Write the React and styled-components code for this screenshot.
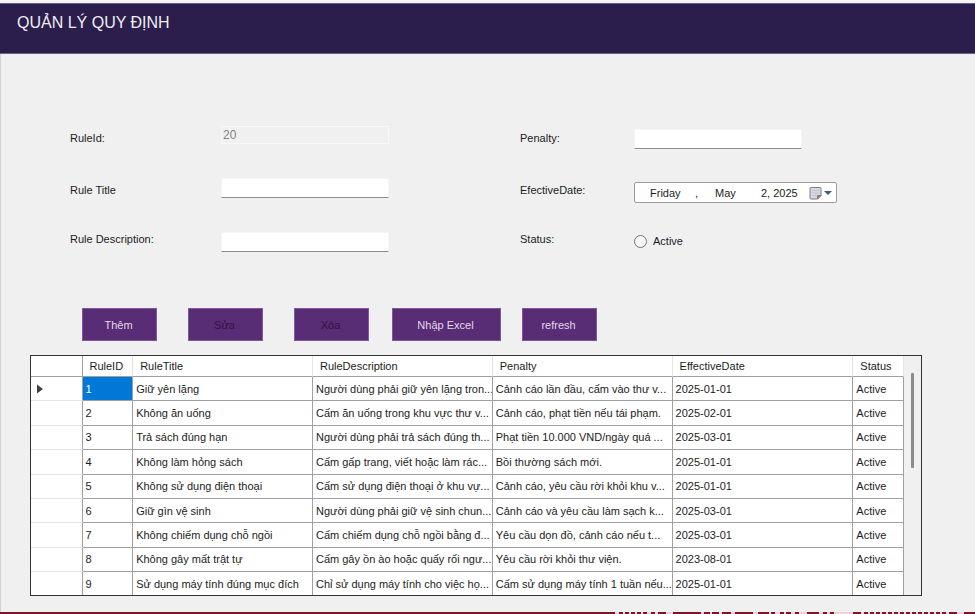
import React, { useState } from "react";
import styled, { createGlobalStyle } from "styled-components";

const GlobalStyle = createGlobalStyle`
  * { box-sizing: border-box; }
  body {
    margin: 0;
    background: #f0f0f0;
    color: #1c1c1c;
    font-family: "Liberation Sans", Arial, sans-serif;
    font-size: 11px;
    line-height: 16px;
  }
  button, input { font: inherit; color: inherit; }
`;

const Page = styled.div`
  min-height: 100vh;
  display: flex;
  flex-direction: column;
  border-top: 3px solid #f4f4f6;
  background: #f0f0f0;
`;

const Header = styled.header`
  height: 51px;
  padding: 9px 17px;
  background: #2b1e4c;
  border-top: 1px solid #6c6384;
  border-bottom: 1px solid #6c6384;
`;

const Title = styled.h1`
  margin: 0;
  color: #f0eef4;
  font-size: 16px;
  font-weight: 400;
  line-height: 20px;
`;

const Main = styled.main`
  flex: 1;
  padding: 72px 0 16px;
  border-left: 1px solid #d3d0dc;
`;

const Form = styled.form`
  display: grid;
  grid-template-columns: 151fr 299fr 114fr 341fr;
  grid-template-rows: 52px 49px 25px;
  padding-left: 69px;
`;

const Label = styled.label`
  height: 24px;
  line-height: 24px;
`;

const Control = styled.div`
  display: flex;
  height: 25px;
  align-items: ${(p) => p.$align || "center"};
`;

const TextInput = styled.input`
  width: 168px;
  height: 20px;
  padding: 0 2px;
  border: 1px solid #f5f5f5;
  border-bottom: 1px solid #8c8c8c;
  background: #fff;
  outline: none;

  &:disabled {
    height: 18px;
    padding: 0 1px;
    border: 1px solid #f8f8f8;
    background: #f0f0f0;
    color: #848484;
    font-size: 12px;
  }
`;

const DateButton = styled.button`
  display: grid;
  grid-template-columns: 45px 20px 46px 38px auto;
  align-items: center;
  width: 203px;
  height: 21px;
  padding: 0 4px 0 15px;
  border: 1px solid #9c9c9c;
  border-radius: 2px;
  background: #fff;
  text-align: left;
  white-space: nowrap;
`;

const CalendarMark = styled.svg`
  display: block;
  width: 23px;
  height: 14px;
  justify-self: end;
`;

const RadioLabel = styled.label`
  display: flex;
  align-items: center;
  gap: 6px;
  height: 22px;
`;

const Radio = styled.input`
  appearance: none;
  width: 13px;
  height: 13px;
  margin: 0;
  border: 1px solid #757575;
  border-radius: 50%;
  background: #f5f5f5;

  &:checked { box-shadow: inset 0 0 0 3px #f5f5f5; background: #333; }
`;

const Toolbar = styled.div`
  display: flex;
  flex-wrap: wrap;
  gap: 23px;
  padding: 56px 0 14px 81px;
`;

const ButtonGroup = styled.div`
  display: flex;
  gap: ${(p) => p.$gap};
`;

const ActionButton = styled.button`
  width: ${(p) => (p.$wide ? "109px" : "75px")};
  height: 33px;
  padding: 0 2px 0 0;
  border: 1px solid #7d599a;
  background: #592c76;
  color: #e2d9e8;

  &:disabled { color: #2e1540; }
`;

const GridPanel = styled.section`
  display: flex;
  margin: 0 53px 0 29px;
  border: 1px solid #333;
  background: #fff;
  overflow: hidden;
`;

const Table = styled.table`
  flex: 1;
  min-width: 0;
  width: 100%;
  height: 239px;
  table-layout: fixed;
  border-collapse: separate;
  border-spacing: 0;
`;

const HeadCell = styled.th`
  height: 21px;
  padding: 0 7px;
  border-right: 1px solid ${(p) => (p.$strong ? "#a0a0a0" : "#e5e5e5")};
  border-bottom: 1px solid #a0a0a0;
  font-weight: 400;
  text-align: left;
`;

const RowHead = styled.th`
  padding: 0 6px;
  border-right: 1px solid #a0a0a0;
  border-bottom: 1px solid #e5e5e5;
  text-align: left;

  tr:last-child & { border-bottom: 0; }
`;

const Cell = styled.td`
  padding: 0 0 0 3px;
  border-right: 1px solid #a0a0a0;
  border-bottom: 1px solid #a0a0a0;
  background: ${(p) => (p.$selected ? "#0078d7" : "#fff")};
  color: ${(p) => (p.$selected ? "#fff" : "inherit")};
  overflow: hidden;
  white-space: nowrap;

  tr:last-child & { border-bottom: 0; }
`;

const Arrow = styled.svg`
  display: block;
  width: 6px;
  height: 10px;
`;

const ScrollTrack = styled.div`
  flex: 0 0 17px;
  display: flex;
  justify-content: center;
  padding-top: 17px;
  background: #f0f0f0;
`;

const ScrollThumb = styled.div`
  width: 3px;
  height: 95px;
  border-radius: 1px;
  background: #8c8c8c;
`;

const BottomEdge = styled.footer`
  height: 2px;
  overflow: hidden;
  background: #7d1428;
`;

const EdgeMarks = styled.svg`
  display: block;
  margin-left: auto;
  width: 362px;
  height: 2px;
`;

const rules = [
  [1, "Giữ yên lặng", "Người dùng phải giữ yên lặng tron...", "Cảnh cáo lần đầu, cấm vào thư v...", "2025-01-01"],
  [2, "Không ăn uống", "Cấm ăn uống trong khu vực thư v...", "Cảnh cáo, phạt tiền nếu tái phạm.", "2025-02-01"],
  [3, "Trả sách đúng hạn", "Người dùng phải trả sách đúng th...", "Phạt tiền 10.000 VND/ngày quá ...", "2025-03-01"],
  [4, "Không làm hỏng sách", "Cấm gấp trang, viết hoặc làm rác...", "Bồi thường sách mới.", "2025-01-01"],
  [5, "Không sử dụng điện thoại", "Cấm sử dụng điện thoại ở khu vự...", "Cảnh cáo, yêu cầu rời khỏi khu v...", "2025-01-01"],
  [6, "Giữ gìn vệ sinh", "Người dùng phải giữ vệ sinh chun...", "Cảnh cáo và yêu cầu làm sạch k...", "2025-03-01"],
  [7, "Không chiếm dụng chỗ ngồi", "Cấm chiếm dụng chỗ ngồi bằng đ...", "Yêu cầu dọn đồ, cảnh cáo nếu t...", "2025-03-01"],
  [8, "Không gây mất trật tự", "Cấm gây ồn ào hoặc quấy rối ngư...", "Yêu cầu rời khỏi thư viện.", "2023-08-01"],
  [9, "Sử dụng máy tính đúng mục đích", "Chỉ sử dụng máy tính cho việc họ...", "Cấm sử dụng máy tính 1 tuần nếu...", "2025-01-01"],
];

const Col = styled.col`
  width: ${(p) => p.$share}%;
`;

const columnShares = [5.9, 5.8, 20.6, 20.6, 20.6, 20.7, 5.8];
const headings = ["RuleID", "RuleTitle", "RuleDescription", "Penalty", "EffectiveDate", "Status"];

export default function App() {
  const [active, setActive] = useState(false);

  return (
    <>
      <GlobalStyle />
      <Page>
        <Header>
          <Title>QUẢN LÝ QUY ĐỊNH</Title>
        </Header>
        <Main>
          <Form onSubmit={(e) => e.preventDefault()}>
            <Label htmlFor="rule-id">RuleId:</Label>
            <Control $align="flex-start">
              <TextInput id="rule-id" defaultValue="20" disabled />
            </Control>
            <Label htmlFor="penalty">Penalty:</Label>
            <Control>
              <TextInput id="penalty" />
            </Control>

            <Label htmlFor="rule-title">Rule Title</Label>
            <Control $align="flex-start">
              <TextInput id="rule-title" />
            </Control>
            <Label htmlFor="effective-date">EfectiveDate:</Label>
            <Control $align="flex-end">
              <DateButton id="effective-date" type="button">
                <span>Friday</span>
                <span>,</span>
                <span>May</span>
                <span>2, 2025</span>
                <CalendarMark viewBox="0 0 23 14" aria-hidden="true">
                  <path d="M2 1.500h9q1 0 1 1v7l-3.500 3.500h-6.500q-1 0-1-1v-9.500q0-1 1-1z" fill="#d5dae3" stroke="#85797b" />
                  <path d="M3 4.500h7M3 7h7M3 9.500h5" stroke="#bcc5d3" />
                  <path d="M12 9.500h-3.500v3.500z" fill="#8b8285" stroke="#85797b" />
                  <path d="M15 5h8l-4 4z" fill="#3d5788" />
                </CalendarMark>
              </DateButton>
            </Control>

            <Label htmlFor="rule-description">Rule Description:</Label>
            <Control $align="flex-end">
              <TextInput id="rule-description" />
            </Control>
            <Label as="span" id="status-label">Status:</Label>
            <Control $align="flex-end" role="radiogroup" aria-labelledby="status-label">
              <RadioLabel>
                <Radio type="radio" name="status" checked={active} onChange={() => setActive(true)} />
                Active
              </RadioLabel>
            </Control>
          </Form>

          <Toolbar>
            <ButtonGroup $gap="31px">
              <ActionButton type="button">Thêm</ActionButton>
              <ActionButton type="button" disabled>Sửa</ActionButton>
              <ActionButton type="button" disabled>Xóa</ActionButton>
            </ButtonGroup>
            <ButtonGroup $gap="21px">
              <ActionButton type="button" $wide>Nhập Excel</ActionButton>
              <ActionButton type="button">refresh</ActionButton>
            </ButtonGroup>
          </Toolbar>

          <GridPanel>
            <Table>
              <colgroup>
                {columnShares.map((share, i) => <Col key={i} $share={share} />)}
              </colgroup>
              <thead>
                <tr>
                  <HeadCell $strong aria-label="Current row" />
                  {headings.map((name) => <HeadCell key={name} scope="col">{name}</HeadCell>)}
                </tr>
              </thead>
              <tbody>
                {rules.map(([id, ...values], index) => (
                  <tr key={id}>
                    <RowHead scope="row">
                      {index === 0 && (
                        <Arrow viewBox="0 0 6 10" aria-label="Current">
                          <path d="M0 0.500v9l6-4.500z" fill="#404040" />
                        </Arrow>
                      )}
                    </RowHead>
                    <Cell $selected={index === 0}>{id}</Cell>
                    {values.map((value, i) => <Cell key={i}>{value}</Cell>)}
                    <Cell>Active</Cell>
                  </tr>
                ))}
              </tbody>
            </Table>
            <ScrollTrack>
              <ScrollThumb />
            </ScrollTrack>
          </GridPanel>
        </Main>
        <BottomEdge>
          <EdgeMarks viewBox="0 0 362 2" aria-hidden="true">
            <path
              d="M2 1h4M10 1h2M16 1h2M22 1h2M28 1h2M34 1h4M42 1h3M53 1h7M88 1h3M97 1h2M106 1h3M118 1h4M140 1h5M156 1h2M162 1h5M171 1h2M178 1h4M186 1h8M206 1h4M214 1h3M221 1h19M248 1h3M255 1h2M261 1h2M267 1h2M273 1h2M279 1h2M285 1h2M291 1h2M297 1h2M303 1h2M309 1h2M315 1h2M321 1h2M327 1h2M333 1h3M344 1h7"
              stroke="#e8d4d8"
              strokeWidth="2"
            />
          </EdgeMarks>
        </BottomEdge>
      </Page>
    </>
  );
}
